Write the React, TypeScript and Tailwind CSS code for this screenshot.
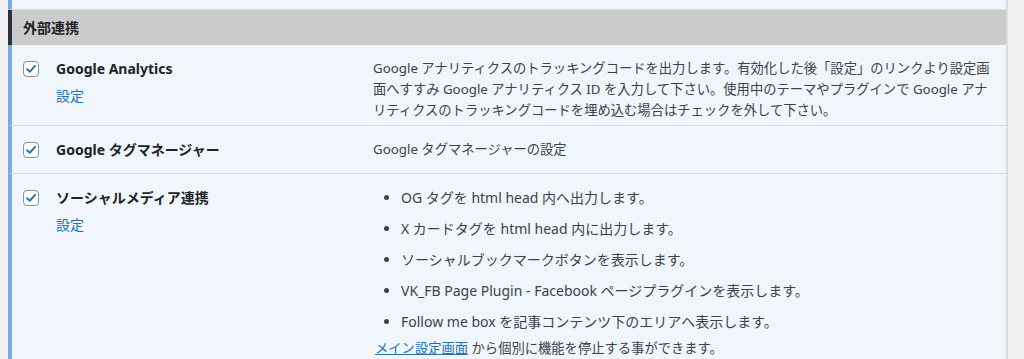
const Check = () => (
  <span className="mt-[3px] flex h-4 w-4 shrink-0 items-center justify-center rounded-[4px] border border-[#8c8f94] bg-white">
    <svg viewBox="0 0 16 16" className="h-[14px] w-[14px]">
      <path d="M3.5 8.2 L6.6 11.2 L12.6 4.4" fill="none" stroke="#2271b1" strokeWidth="2.2" strokeLinecap="round" strokeLinejoin="round" />
    </svg>
  </span>
);

const bullets = [
  "OG タグを html head 内へ出力します。",
  "X カードタグを html head 内に出力します。",
  "ソーシャルブックマークボタンを表示します。",
  "VK_FB Page Plugin - Facebook ページプラグインを表示します。",
  "Follow me box を記事コンテンツ下のエリアへ表示します。",
];

const App = () => {
  return (
    <div
      className="flex h-[359px] w-[1024px] overflow-hidden bg-[#f0f0f1] text-[13.3px] leading-[21px] text-[#3c434a]"
      style={{ fontFamily: '"Noto Sans", "Noto Sans CJK JP", sans-serif' }}
    >
      <div className="w-2 shrink-0" />
      <div className="flex w-[1000px] shrink-0 flex-col border-r-2 border-[#dcdcde]">
        <div className="h-[10px] shrink-0 border-b border-l-4 border-b-[#dcdcde] border-l-[#72aee6] bg-[#f0f6fc]" />
        <div className="flex h-[35px] shrink-0 items-center border-l-4 border-[#2c3338] bg-[#cbcbcb] pl-[11px] text-[14px] font-bold text-[#1d2327]">
          外部連携
        </div>

        <div className="flex h-[81px] shrink-0 border-b border-l-4 border-b-[#dcdcde] border-l-[#72aee6] bg-[#f0f6fc] pt-[13px]">
          <div className="w-[44px] shrink-0 pl-[11px]">
            <Check />
          </div>
          <div className="w-[317px] shrink-0">
            <div className="text-[14px] font-bold text-[#1d2327]">Google Analytics</div>
            <div className="mt-[6px] text-[14px] text-[#2271b1]">設定</div>
          </div>
          <div className="w-[626px] shrink-0">
            Google アナリティクスのトラッキングコードを出力します。有効化した後「設定」のリンクより設定画面へすすみ Google アナリティクス ID を入力して下さい。使用中のテーマやプラグインで Google アナリティクスのトラッキングコードを埋め込む場合はチェックを外して下さい。
          </div>
        </div>

        <div className="flex h-[48px] shrink-0 border-b border-l-4 border-b-[#dcdcde] border-l-[#72aee6] bg-[#f0f6fc] pt-[13px]">
          <div className="w-[44px] shrink-0 pl-[11px]">
            <Check />
          </div>
          <div className="w-[317px] shrink-0 text-[14px] font-bold text-[#1d2327]">Google タグマネージャー</div>
          <div className="w-[626px] shrink-0">Google タグマネージャーの設定</div>
        </div>

        <div className="flex flex-1 border-l-4 border-[#72aee6] bg-[#f0f6fc] pt-[13px]">
          <div className="w-[44px] shrink-0 pl-[11px]">
            <Check />
          </div>
          <div className="w-[317px] shrink-0">
            <div className="text-[14px] font-bold text-[#1d2327]">ソーシャルメディア連携</div>
            <div className="mt-[6px] text-[14px] text-[#2271b1]">設定</div>
          </div>
          <div className="w-[626px] shrink-0">
            <ul className="ml-[28px] list-disc text-[14px]">
              {bullets.map((b) => (
                <li key={b} className="mb-[10px]">
                  {b}
                </li>
              ))}
            </ul>
            <p className="-mt-[4px] pl-[2px]">
              <span className="text-[#2271b1] underline">メイン設定画面</span> から個別に機能を停止する事ができます。
            </p>
          </div>
        </div>
      </div>
    </div>
  );
};

export default App;
